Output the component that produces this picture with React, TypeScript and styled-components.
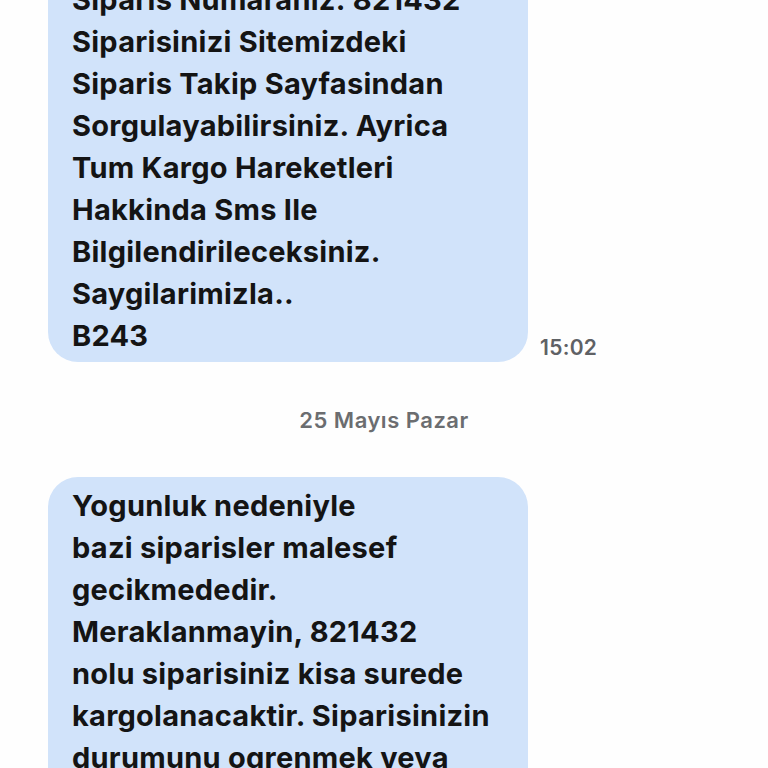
import React from "react";
import styled, { createGlobalStyle } from "styled-components";

const Global = createGlobalStyle`
  html, body { margin: 0; padding: 0; background: #fefefe; }
  body { font-family: Inter, "Noto Sans", sans-serif; overflow: hidden; }
`;

const Thread = styled.div`
  display: flex;
  flex-direction: column;
  width: 768px;
  margin-top: -29px;
`;

const Row = styled.div`
  display: flex;
  align-items: flex-end;
  gap: 12px;
  padding-left: 48px;
`;

const Bubble = styled.div`
  width: 480px;
  box-sizing: border-box;
  background: #d1e3fa;
  border-radius: 30px;
  padding: 8px 24px 5px 24px;
  color: #141414;
  font-size: 29px;
  font-weight: 650;
  line-height: 42px;
  letter-spacing: 0.25px;
`;

const Line = styled.div`
  white-space: nowrap;
`;

const Time = styled.div`
  color: #5f6165;
  font-size: 21px;
  font-weight: 600;
  line-height: 24px;
  letter-spacing: 0.3px;
  margin-bottom: 2px;
`;

const DateLabel = styled.div`
  text-align: center;
  color: #6b6d70;
  font-size: 22px;
  font-weight: 600;
  line-height: 24px;
  letter-spacing: 0.5px;
  margin: 46px 0 45px;
`;

const first = [
  "Siparis Numaraniz: 821432",
  "Siparisinizi Sitemizdeki",
  "Siparis Takip Sayfasindan",
  "Sorgulayabilirsiniz. Ayrica",
  "Tum Kargo Hareketleri",
  "Hakkinda Sms Ile",
  "Bilgilendirileceksiniz.",
  "Saygilarimizla..",
  "B243",
];

const second = [
  "Yogunluk nedeniyle",
  "bazi siparisler malesef",
  "gecikmededir.",
  "Meraklanmayin, 821432",
  "nolu siparisiniz kisa surede",
  "kargolanacaktir. Siparisinizin",
  "durumunu ogrenmek veya",
  "sorularinizi iletmek icin",
];

export default function App() {
  return (
    <>
      <Global />
      <Thread>
        <Row>
          <Bubble>
            {first.map((l, i) => (
              <Line key={i}>{l}</Line>
            ))}
          </Bubble>
          <Time>15:02</Time>
        </Row>
        <DateLabel>25 Mayıs Pazar</DateLabel>
        <Row>
          <Bubble>
            {second.map((l, i) => (
              <Line key={i}>{l}</Line>
            ))}
          </Bubble>
        </Row>
      </Thread>
    </>
  );
}
